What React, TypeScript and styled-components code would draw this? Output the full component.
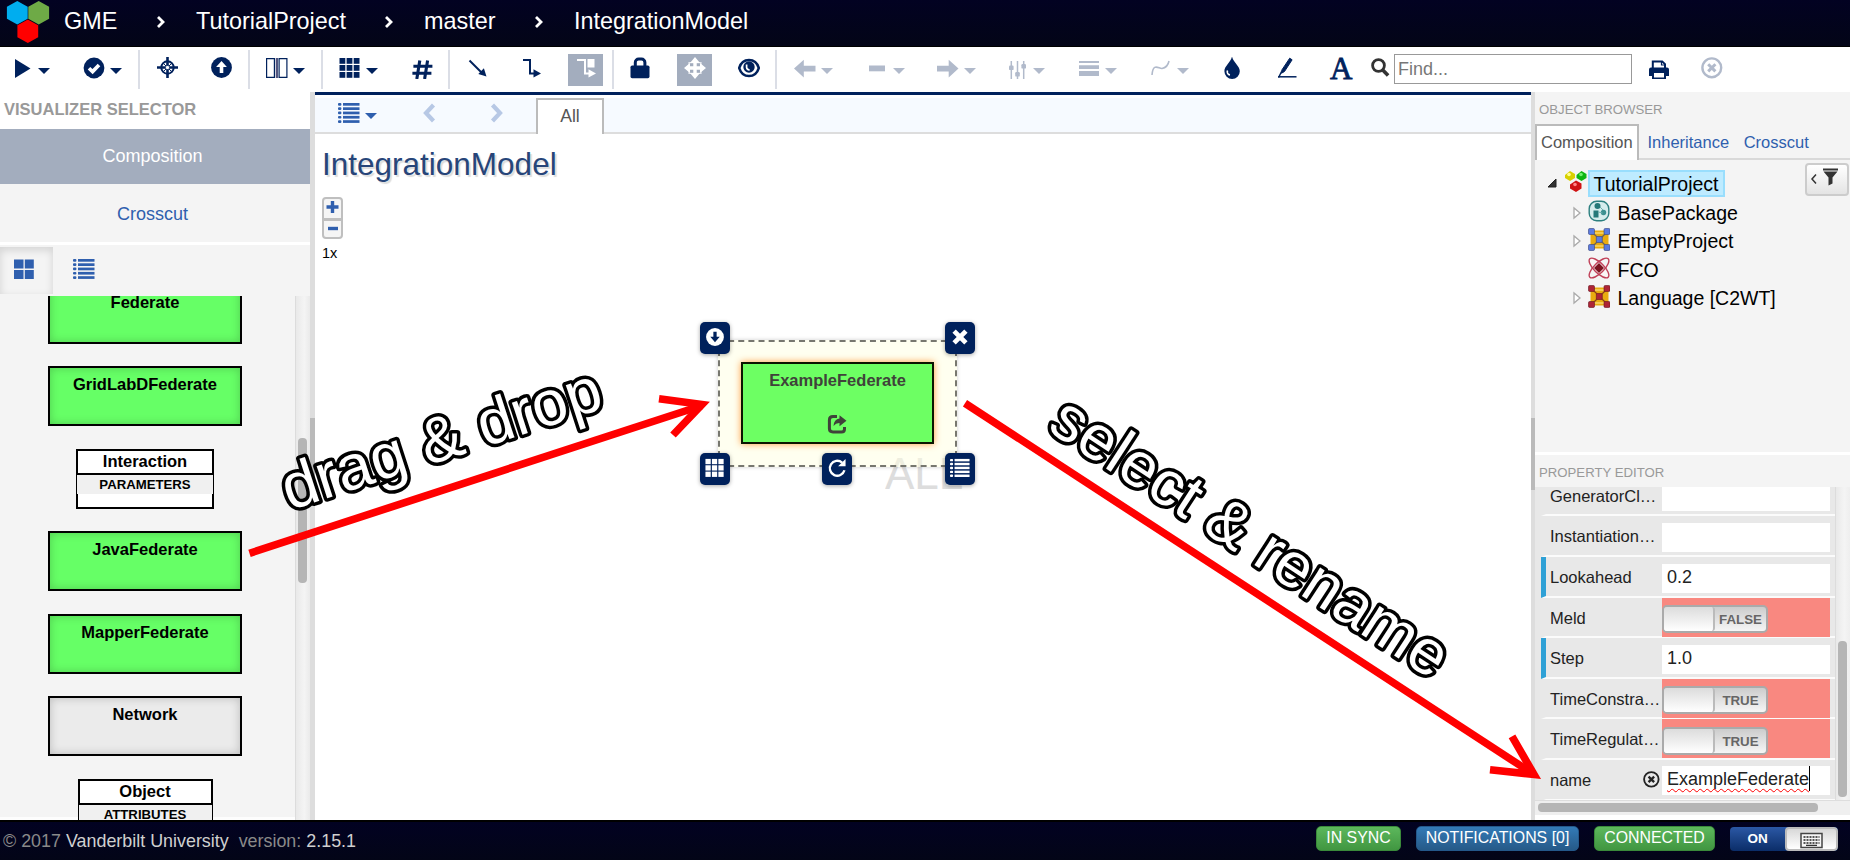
import React from 'react';
import styled, { createGlobalStyle, css } from 'styled-components';

const NAVY = '#00215c';
const BLUE = '#2f5fae';
const MUTED = '#b1bacb';

const GlobalStyle = createGlobalStyle`
  * { box-sizing: border-box; }
  body { margin: 0; background: #fff; font-family: "Liberation Sans", Arial, sans-serif; }
`;

const Page = styled.div`
  position: relative;
  display: flex;
  flex-direction: column;
  width: 1850px;
  height: 860px;
  overflow: hidden;
`;

/* ---------- icons ---------- */

const Glyph = styled.svg`
  display: block;
  flex: none;
  width: 22px;
  height: 22px;
`;

const grid9 = [1, 8, 15].flatMap((y) => [0.5, 7.6, 14.7].map((x) => (
  <rect key={`${x}-${y}`} x={x} y={y} width="5.8" height="5.8" />
)));

const listRows = [1, 5.3, 9.6, 13.9, 18.2].map((y) => (
  <React.Fragment key={y}>
    <rect x="0" y={y} width="3.4" height="2.7" rx="1" />
    <rect x="5" y={y} width="16.5" height="2.7" />
  </React.Fragment>
));

const icons: Record<string, React.ReactNode> = {
  play: <path d="M4 2 L19.5 11.5 L4 21 Z" />,
  check: (
    <>
      <circle cx="11" cy="11" r="10.4" />
      <path d="M6 11.2 L9.6 14.6 L16 8" fill="none" stroke="#fff" strokeWidth="3.6" />
    </>
  ),
  target: (
    <>
      <circle cx="10.5" cy="10.5" r="6.2" fill="none" stroke="currentColor" strokeWidth="2" />
      <path d="M10.5 0v21M0 10.5h21" stroke="currentColor" strokeWidth="2.6" fill="none" />
      <path d="M6.5 6.5l8 8M14.5 6.5l-8 8" stroke="currentColor" strokeWidth="1" fill="none" />
      <circle cx="10.5" cy="10.5" r="1.7" fill="#fff" />
    </>
  ),
  up: (
    <>
      <circle cx="10.5" cy="10.5" r="10.4" />
      <path d="M10.5 4.1l5.4 6h-3.6v6H8.7v-6H5.1z" fill="#fff" />
    </>
  ),
  down: (
    <>
      <circle cx="11" cy="11" r="9.8" fill="#fff" />
      <path d="M11 16.8l5.2-6h-3.400V5.200H9.200v5.600H5.800z" fill={NAVY} />
    </>
  ),
  columns: (
    <>
      <path d="M.6 1.6h7.8v18.8H.6zM13.1 1.6h7.8v18.8h-7.8z" fill="none" stroke="currentColor" strokeWidth="1.2" />
      <path d="M10.8 1v20" stroke="currentColor" strokeWidth="2" />
      <path d="M10.8 1v20" stroke="#a07a95" strokeWidth=".8" />
    </>
  ),
  grid: <>{grid9}</>,
  hash: <path d="M8.8 3.5L5.8 22M16.6 3.5l-3 18.5M2.4 9.3h19M1.4 16.2h19" fill="none" stroke="currentColor" strokeWidth="3.1" />,
  diagonal: (
    <>
      <path d="M2.5 3.5L15 16" stroke="currentColor" strokeWidth="2" />
      <path d="M19.5 19.5l-8.2-2.6 5.6-5.6z" />
    </>
  ),
  elbow: (
    <>
      <path d="M3 3h7v13.4h6" stroke="currentColor" strokeWidth="2" fill="none" />
      <path d="M21 16.4l-7.5-4.2v8.4z" />
    </>
  ),
  elbowBox: (
    <>
      <path d="M2 3h8v13.4h6" stroke="currentColor" strokeWidth="2" fill="none" />
      <path d="M21 16.4l-7.5-4.2v8.4z" />
      <rect x="12.5" y="2" width="7" height="8.5" />
    </>
  ),
  lock: (
    <>
      <rect x="1.5" y="8.6" width="19" height="12.6" rx="1.6" />
      <path d="M6.3 10V5.400A3.400 3.400 0 0 1 9.700 2h2.800A3.400 3.400 0 0 1 15.900 5.400V10" fill="none" stroke="currentColor" strokeWidth="3" />
    </>
  ),
  move: (
    <>
      <path d="M11 0l5 6H6zM11 22l5-6H6zM0 11l6-5v10zM22 11l-6-5v10z" />
      <path d="M11 4v14M4 11h14" stroke="currentColor" strokeWidth="3.4" />
      <path d="M5 5.6h12v10.8H5z" fill="none" stroke="currentColor" strokeWidth="1.2" opacity=".75" />
    </>
  ),
  eye: (
    <>
      <path d="M1.2 11C3 5 6.5 3 11 3s8 2 9.800 8c-1.800 6-5.300 8-9.800 8s-8-2-9.800-8z" fill="none" stroke="currentColor" strokeWidth="2.6" />
      <circle cx="11" cy="10" r="5.700" />
      <path d="M8.600 7.400v3a2.800 2.800 0 0 0 3 2.400" stroke="#fff" strokeWidth="1.700" fill="none" />
    </>
  ),
  left: <path d="M0 11.500l9.800-8.700v6h11.700v5.600H9.800v6z" />,
  right: <path d="M21.500 11.500l-9.800-8.700v6H0v5.600h11.700v6z" />,
  minus: <rect x="3" y="8.500" width="16" height="5.800" />,
  sliders: (
    <>
      <path d="M5.300 4v18M11.500 4v18M17.700 4v18" stroke="currentColor" strokeWidth="1.500" />
      <rect x="3" y="8.500" width="4.600" height="4.600" rx="1.200" />
      <rect x="9.200" y="15" width="4.600" height="4.600" rx="1.200" />
      <rect x="15.400" y="7" width="4.600" height="4.600" rx="1.200" />
    </>
  ),
  lines: <path d="M1 4h20v2H1zM1 8.300h20v3.600H1zM1 14h20v5H1z" />,
  curve: <path d="M2 18C3 5 9 12 12 11.500S18 9 19 4" fill="none" stroke="currentColor" strokeWidth="1.600" />,
  drop: (
    <>
      <path d="M11 -.6C12 5 18.800 9 18.800 14.200a7.700 7.700 0 0 1-15.400 0C3.400 9 10 5 11-.6z" />
      <path d="M6.600 13.500a3 3 0 0 0 2.400 4.400" stroke="#fff" strokeWidth="1.600" fill="none" />
    </>
  ),
  pencil: (
    <>
      <path d="M13.700 1.200l2.400 1.600L8.500 14.500l-3 1.700.4-3.300z" stroke="currentColor" strokeWidth="1" />
      <path d="M5.600 14.500l-3 6" stroke="currentColor" strokeWidth="1.500" />
      <path d="M2 19.800h18.500" stroke="currentColor" strokeWidth="1.500" />
    </>
  ),
  search: (
    <>
      <circle cx="9.500" cy="8.500" r="5.900" fill="none" stroke="currentColor" strokeWidth="2.800" />
      <path d="M13.500 12.800l5.600 5.800" stroke="currentColor" strokeWidth="3.600" />
    </>
  ),
  print: (
    <>
      <path d="M4.800 11V4.500h9.400l2.800 2.600V11M5 16v5.500h12V16" fill="none" stroke="currentColor" strokeWidth="2" />
      <path d="M1 12.500q0-2 2-2h16q2 0 2 2V19h-4v-3H5v3H1z" />
      <path d="M13.500 4v4H17" fill="none" stroke="currentColor" strokeWidth="1.200" />
    </>
  ),
  remove: (
    <>
      <circle cx="10.800" cy="10.800" r="9.400" fill="none" stroke="currentColor" strokeWidth="2.400" />
      <path d="M7.200 7.200l7.200 7.200M14.400 7.200l-7.200 7.200" stroke="currentColor" strokeWidth="3" />
    </>
  ),
  cross: <path d="M4.500 4.500l13 13M17.500 4.500l-13 13" stroke="currentColor" strokeWidth="5.200" />,
  list: <>{listRows}</>,
  tiles: <path d="M0 1.500h9.500v9H0zM10.800 1.500h9v9h-9zM0 12h9.500v9H0zM10.800 12h9v9h-9z" />,
  chevronLeft: <path d="M14.500 3L7 11l7.500 8" fill="none" stroke="currentColor" strokeWidth="4.200" />,
  chevronRight: <path d="M6.500 3L14 11l-7.500 8" fill="none" stroke="currentColor" strokeWidth="4.200" />,
  refresh: (
    <>
      <path d="M19.200 13.500A8.200 8.200 0 1 1 16.600 5" fill="none" stroke="currentColor" strokeWidth="2.600" />
      <path d="M20.400 1v8.200h-8.200z" />
    </>
  ),
  share: (
    <>
      <path d="M11 3.600H7Q3.400 3.600 3.400 7v8.600Q3.400 19 7 19h8.500q3 0 3-3v-2" fill="none" stroke="currentColor" strokeWidth="3" />
      <path d="M13.500 2.200l7 5.600-7 5.400V10q-3.500-.2-6 3 .5-7 6-7.500z" />
    </>
  ),
};

const Icon = ({ name }: { name: string }) => (
  <Glyph viewBox="0 0 22 22" fill="currentColor">{icons[name]}</Glyph>
);

/* ---------- header ---------- */

const Header = styled.header`
  display: flex;
  height: 47px;
  flex: none;
  padding-left: 6px;
  background: linear-gradient(#020222, #030517);
  border-bottom: 1px solid #000;
  color: #fff;
  font-size: 23.4px;
  line-height: 42px;
`;

const Logo = styled.svg`
  width: 44px;
  height: 44px;
  margin-right: 14px;
`;

const Crumb = styled.span<{ $width: number }>`
  width: ${(p) => p.$width}px;
  white-space: nowrap;
`;

const CrumbArrow = styled.svg`
  width: 10px;
  height: 12px;
  margin: 16px 30px 0 0;
`;

const hexagon = (cx: number, cy: number) =>
  `M${cx} ${cy - 11.700}l10.400 5.700v12l-10.400 5.700l-10.400-5.700v-12z`;

/* ---------- toolbar ---------- */

const Toolbar = styled.nav`
  display: flex;
  align-items: flex-start;
  flex: none;
  height: 45px;
  padding-top: 10px;
  background: #fff;
`;

const Tool = styled.div<{ $gap: number; $disabled?: boolean }>`
  display: flex;
  height: 22px;
  margin-left: ${(p) => p.$gap}px;
  color: ${(p) => (p.$disabled ? MUTED : NAVY)};
`;

const ActiveTool = styled.div<{ $gap: number }>`
  display: flex;
  justify-content: center;
  width: 35px;
  height: 32px;
  margin: -3px 0 0 ${(p) => p.$gap}px;
  padding-top: 3px;
  background: #a3adbe;
  color: #fff;
`;

const ToolDivider = styled.i<{ $gap: number }>`
  width: 2px;
  height: 39px;
  margin: -7px 0 0 ${(p) => p.$gap}px;
  background: #dbdee6;
`;

const Caret = styled.i`
  width: 0;
  height: 0;
  margin: 11px 0 0 5px;
  border: 6px solid transparent;
  border-top-color: currentColor;
  border-bottom: 0;
`;

const FontLetter = styled.span`
  width: 22px;
  text-align: center;
  font: 31px/23px "Liberation Serif", serif;
  -webkit-text-stroke: 0.8px currentColor;
`;

const SearchIcon = styled(Tool)`
  color: #333;
`;

const FindInput = styled.input`
  width: 238px;
  height: 30px;
  margin: -3px 0 0 3px;
  padding: 0 3px;
  border: 1px solid #999;
  font: 18px "Liberation Sans", Arial, sans-serif;
  &::placeholder { color: #777; opacity: 1; }
`;

type ToolSpec = { gap: number; icon?: string; caret?: boolean; active?: boolean; disabled?: boolean };

const tools: ToolSpec[] = [
  { gap: 11, icon: 'play', caret: true },
  { gap: 33, icon: 'check', caret: true },
  { gap: 16 },
  { gap: 17, icon: 'target' },
  { gap: 32, icon: 'up' },
  { gap: 15 },
  { gap: 16, icon: 'columns', caret: true },
  { gap: 16 },
  { gap: 16, icon: 'grid', caret: true },
  { gap: 33, icon: 'hash' },
  { gap: 15 },
  { gap: 17, icon: 'diagonal' },
  { gap: 31, icon: 'elbow' },
  { gap: 26, icon: 'elbowBox', active: true },
  { gap: 9 },
  { gap: 15, icon: 'lock' },
  { gap: 26, icon: 'move', active: true },
  { gap: 26, icon: 'eye' },
  { gap: 15 },
  { gap: 17, icon: 'left', caret: true, disabled: true },
  { gap: 33, icon: 'minus', caret: true, disabled: true },
  { gap: 32, icon: 'right', caret: true, disabled: true },
  { gap: 30, icon: 'sliders', caret: true, disabled: true },
  { gap: 33, icon: 'lines', caret: true, disabled: true },
  { gap: 33, icon: 'curve', caret: true, disabled: true },
  { gap: 32, icon: 'drop' },
  { gap: 33, icon: 'pencil' },
];

const ToolEntry = ({ gap, icon, caret, active, disabled }: ToolSpec) => {
  if (!icon) return <ToolDivider $gap={gap} />;
  if (active) return <ActiveTool $gap={gap}><Icon name={icon} /></ActiveTool>;
  return (
    <Tool $gap={gap} $disabled={disabled}>
      <Icon name={icon} />
      {caret && <Caret />}
    </Tool>
  );
};

/* ---------- left panel ---------- */

const Main = styled.main`
  display: flex;
  height: 728px;
  flex: none;
`;

const LeftPanel = styled.aside`
  display: flex;
  flex-direction: column;
  width: 310px;
  flex: none;
  background: #f4f4f4;
`;

const SelectorTitle = styled.h2`
  height: 37px;
  margin: 0;
  padding-left: 4px;
  background: #fff;
  color: #999;
  font-size: 16.500px;
  line-height: 34px;
`;

const SelectorItem = styled.div<{ $active?: boolean }>`
  height: ${(p) => (p.$active ? 55 : 58)}px;
  background: ${(p) => (p.$active ? '#a3adbe' : '#f4f4f4')};
  color: ${(p) => (p.$active ? '#fff' : BLUE)};
  font-size: 18px;
  line-height: ${(p) => (p.$active ? 55 : 61)}px;
  text-align: center;
  text-indent: -5px;
`;

const ViewTabs = styled.div`
  display: flex;
  height: 54px;
  border-top: 3px solid #fff;
  color: ${BLUE};
`;

const ViewTab = styled.div<{ $active?: boolean }>`
  width: 53px;
  height: 47px;
  margin-top: 2px;
  padding: 11px 0 0 14px;
  ${(p) => p.$active && css`
    box-shadow: inset 0 3px 8px rgba(0, 0, 0, 0.14);
  `}
  ${(p) => !p.$active && css`padding-left: 20px;`}
`;

const PartsArea = styled.div`
  display: flex;
  flex: 1;
  min-height: 0;
  overflow: hidden;
  background: linear-gradient(to top, #fdfdfd 3px, #f4f4f4 3px);
`;

const PartsList = styled.div`
  display: flex;
  flex-direction: column;
  align-items: center;
  gap: 22.500px;
  width: 295px;
  padding-right: 5px;
  margin-top: -12.500px;
`;

const Track = styled.div`
  width: 15px;
  border-left: 1px solid #dcdcdc;
  background: linear-gradient(90deg, #e9e9e9, #f4f4f4 60%, #eaeaea);
  padding: 142px 0 0 2px;
`;

const PartsThumb = styled.div`
  width: 9px;
  height: 145px;
  border-radius: 4px;
  background: #b5b5b5;
`;

const Part = styled.div<{ $plain?: boolean }>`
  flex: none;
  width: 194px;
  height: 60px;
  padding-top: 6px;
  border: 2px solid #000;
  background: ${(p) => (p.$plain ? '#ebebeb' : '#66ff66')};
  box-shadow: inset 0 0 10px rgba(0, 0, 0, 0.2);
  font-weight: bold;
  font-size: 16.500px;
  line-height: 20px;
  text-align: center;
`;

const RecordPart = styled.div<{ $width: number }>`
  flex: none;
  width: ${(p) => p.$width}px;
  height: 60px;
  border: 2px solid #000;
  background: #fff;
  font-weight: bold;
  text-align: center;
`;

const RecordName = styled.div`
  height: 24px;
  border-bottom: 2px solid #000;
  font-size: 16.500px;
  line-height: 21px;
`;

const RecordSection = styled.div`
  height: 19px;
  margin: 0 -1px;
  background: #f0f0f0;
  font-size: 13.200px;
  line-height: 19px;
`;

const Splitter = styled.div<{ $width: number }>`
  width: ${(p) => p.$width}px;
  flex: none;
  padding-top: 326px;
  background: #ddd;
`;

const SplitterGrip = styled.div`
  height: 72px;
  background: #bababa;
`;

/* ---------- canvas ---------- */

const Workspace = styled.section`
  display: flex;
  flex-direction: column;
  flex: 1;
  border-top: 3px solid ${NAVY};
`;

const TabBar = styled.div`
  display: flex;
  height: 39px;
  padding: 3px 0 0 23px;
  background: linear-gradient(#fff 3px, #f6faff 3px);
  border-bottom: 2px solid #ddd;
  color: ${BLUE};
`;

const TabMenu = styled.div`
  display: flex;
  width: 81px;
  margin-top: 4px;
`;

const TabArrow = styled.div`
  width: 67px;
  margin-top: 4px;
  color: #b7c8e5;
`;

const CanvasTab = styled.div`
  width: 68px;
  height: 36px;
  margin-left: -17px;
  border: 2px solid #bbb;
  border-bottom: 0;
  background: #fff;
  color: #555;
  font-size: 17.600px;
  line-height: 32px;
  text-align: center;
`;

const Canvas = styled.div`
  position: relative;
  flex: 1;
  padding: 9px 0 0 7px;
  background: #fff;
`;

const CanvasTitle = styled.h1`
  margin: 0;
  color: #274579;
  font-size: 31.500px;
  font-weight: normal;
  line-height: 42px;
  text-shadow: 2px 2px 1px #ddd;
`;

const ZoomButtons = styled.div`
  display: flex;
  flex-direction: column;
  width: 21px;
  height: 42px;
  margin-top: 12px;
  border: 2px solid #bfbfbf;
  border-radius: 4px;
  background: #f5f5f5;
`;

const ZoomButton = styled.svg`
  width: 17px;
  height: 19px;
  & + & { border-top: 3px solid #bfbfbf; }
`;

const ZoomLevel = styled.div`
  margin-top: 6px;
  font-size: 14.500px;
  line-height: 17px;
`;

const Watermark = styled.div`
  position: absolute;
  left: 570px;
  top: 318px;
  height: 38px;
  overflow: hidden;
  color: #ddd;
  font-size: 44px;
  line-height: 44px;
`;

const Selection = styled.div`
  position: absolute;
  left: 403px;
  top: 206px;
  width: 239px;
  height: 127px;
  padding: 20px 21px;
  border: 2px dashed #77776f;
  background: rgba(255, 255, 225, 0.5);
  box-shadow: 0 0 4px rgba(0, 0, 0, 0.2);
`;

const SelectedNode = styled.div`
  display: flex;
  flex-direction: column;
  align-items: center;
  width: 193px;
  height: 82px;
  padding-top: 6px;
  border: 2px solid #0b1500;
  background: #6dff63;
  box-shadow: 0 0 7px #ff9b3d;
  color: #40423a;
  font-weight: bold;
  font-size: 16.500px;
  line-height: 21px;
`;

const NodeRef = styled.div`
  margin: 22px 2px 0 0;
`;

const NodeAction = styled.div<{ $x: number; $y: number }>`
  position: absolute;
  left: ${(p) => p.$x}px;
  top: ${(p) => p.$y}px;
  width: 30px;
  height: 32px;
  padding: 5px;
  border-radius: 5px;
  background: ${NAVY};
  color: #fff;
  box-shadow: 0 1px 4px rgba(0, 0, 0, 0.35);
  ${Glyph} { width: 20px; height: 20px; }
`;

/* ---------- right panel ---------- */

const RightPanel = styled.aside`
  display: flex;
  flex-direction: column;
  width: 315px;
  flex: none;
  background: #f4f4f4;
`;

const PanelTitle = styled.h2<{ $line: number }>`
  height: 32px;
  flex: none;
  margin: 0;
  padding-left: 4px;
  color: #999;
  font-size: 13.200px;
  font-weight: normal;
  line-height: ${(p) => p.$line}px;
`;

const BrowserTabs = styled.div`
  display: flex;
  height: 36px;
  color: ${BLUE};
  font-size: 16.500px;
  line-height: 36px;
  box-shadow: inset 0 -2px #d9d9d9;
`;

const BrowserTab = styled.div<{ $active?: boolean }>`
  padding-left: 8.500px;
  padding-right: 6px;
  ${(p) => p.$active && css`
    width: 104px;
    padding: 0 4px;
    border: 2px solid #bbb;
    border-bottom: 0;
    background: #fff;
    color: #555;
    line-height: 33px;
  `}
`;

const Tree = styled.div`
  position: relative;
  height: 292px;
  padding-top: 10px;
`;

const TreeRow = styled.div<{ $root?: boolean }>`
  display: flex;
  height: ${(p) => (p.$root ? 29 : 28.400)}px;
  padding-left: ${(p) => (p.$root ? 11 : 37)}px;
  color: #000;
  font-size: 19.500px;
  line-height: 28px;
`;

const TreeGlyph = styled.svg<{ $width: number }>`
  width: ${(p) => p.$width}px;
  height: 24px;
  flex: none;
`;

const TreeLabel = styled.span<{ $selected?: boolean }>`
  padding-left: 7.500px;
  ${(p) => p.$selected && css`
    width: 137px;
    height: 27px;
    margin-left: 1px;
    padding-left: 3.500px;
    border: 2px solid #99defd;
    background: #beebff;
    line-height: 24px;
  `}
`;

const FilterButton = styled.button`
  position: absolute;
  right: 1px;
  top: 3px;
  width: 44px;
  height: 33px;
  padding: 0;
  border: 2px solid #ccc;
  border-radius: 4px;
  background: linear-gradient(#fff, #e4e4e4);
`;

const PropertyHeader = styled.div`
  height: 35px;
  flex: none;
  border-top: 3px solid #fff;
`;

const PropertyArea = styled.div`
  display: flex;
  height: 313px;
  flex: none;
`;

const PropertyList = styled.div`
  width: 300px;
  padding-left: 6px;
  overflow: hidden;
  background: #e8e8e8;
`;

const PropertyRow = styled.div<{ $marked?: boolean }>`
  display: flex;
  height: 40.600px;
  border-bottom: 2px solid #fbfbfb;
  border-left: 5px solid ${(p) => (p.$marked ? '#2fa1d6' : 'transparent')};
  padding-left: 4px;
  color: #222;
  font-size: 16.500px;
  line-height: 41px;
  &:first-child { margin-top: -11.200px; }
`;

const PropertyLabel = styled.span`
  display: flex;
  justify-content: space-between;
  width: 112px;
  flex: none;
  white-space: nowrap;
`;

const PropertyValue = styled.div<{ $flag?: boolean }>`
  width: 168px;
  height: ${(p) => (p.$flag ? 39 : 29)}px;
  margin-top: ${(p) => (p.$flag ? 0 : 6.500)}px;
  padding: ${(p) => (p.$flag ? '7.500px 0 0' : '0 5px')};
  background: ${(p) => (p.$flag ? '#f98880' : '#fff')};
  font-size: 18px;
  line-height: 26px;
`;

const TypedName = styled.span`
  display: inline-block;
  height: 25px;
  border-right: 1px solid #000;
  text-decoration: underline wavy #f00 1px;
  text-underline-offset: 3px;
  white-space: nowrap;
`;

const Switch = styled.div`
  display: flex;
  width: 106px;
  height: 28px;
  border: 2px solid #aaa;
  border-radius: 5px;
  background: linear-gradient(#ccc, #f6f6f6);
  color: #666;
  font-weight: bold;
  font-size: 13.300px;
  line-height: 25px;
`;

const SwitchKnob = styled.div`
  width: 51px;
  border-right: 2px solid #bbb;
  border-radius: 3px;
  background: linear-gradient(#dcdcdc, #fff);
`;

const SwitchText = styled.span`
  flex: 1;
  text-align: center;
`;

const ClearIcon = styled.span`
  margin: 11.500px 2px 0 0;
  color: #222;
  ${Glyph} { width: 17px; height: 17px; }
`;

const PropertyTrack = styled.div`
  width: 15px;
  padding: 154px 0 0 2px;
  border-left: 1px solid #dcdcdc;
  background: linear-gradient(90deg, #e9e9e9, #f4f4f4 60%, #eee);
`;

const PropertyThumb = styled.div`
  width: 9px;
  height: 156px;
  border-radius: 4px;
  background: #b5b5b5;
`;

const BottomTrack = styled.div`
  height: 15px;
  flex: none;
  padding: 2px 0 0 3px;
  background: #efefef;
  border-top: 1px solid #ddd;
`;

const BottomThumb = styled.div`
  width: 280px;
  height: 9px;
  border-radius: 4px;
  background: #b5b5b5;
`;

const PanelFoot = styled.div`
  flex: 1;
  background: #fff;
`;

/* ---------- footer ---------- */

const Footer = styled.footer`
  display: flex;
  height: 40px;
  flex: none;
  padding: 0 12px 0 3px;
  border-top: 2px solid #000;
  background: linear-gradient(#020222, #030517);
  color: #8a8a8a;
  font-size: 17.900px;
  line-height: 39px;
  white-space: pre;
  b { color: #d0d0d0; font-weight: normal; }
`;

const Status = styled.div`
  display: flex;
  gap: 15px;
  margin-left: auto;
  padding-top: 4px;
`;

const Badge = styled.span<{ $width: number; $blue?: boolean }>`
  width: ${(p) => p.$width}px;
  height: 25px;
  border: 1px solid ${(p) => (p.$blue ? '#24588a' : '#3a8a3a')};
  border-radius: 5px;
  background: ${(p) => (p.$blue ? 'linear-gradient(#337ab7, #265a88)' : 'linear-gradient(#5cb85c, #419641)')};
  color: #fff;
  font-size: 15.900px;
  line-height: 21px;
  text-align: center;
`;

const KeyboardSwitch = styled.div`
  display: flex;
  width: 108px;
  height: 24px;
  margin-top: 1px;
  border-radius: 4px;
  overflow: hidden;
  background: linear-gradient(#2b58a5, #0b2d68);
  color: #fff;
  font-weight: bold;
  font-size: 13.500px;
  line-height: 23px;
  text-align: center;
`;

const SwitchOn = styled.span`
  width: 55px;
`;

const SwitchHandle = styled.svg`
  width: 53px;
  height: 24px;
  border: 2px solid #bbb;
  border-radius: 4px;
  background: linear-gradient(#d8d8d8, #fff);
`;

/* ---------- annotations ---------- */

const Annotations = styled.svg`
  position: absolute;
  left: 0;
  top: 0;
  width: 1850px;
  height: 860px;
  pointer-events: none;
  path { fill: none; stroke: #f00; stroke-width: 7.600; }
  text {
    font-family: "Liberation Sans", Arial, sans-serif;
    font-size: 63.700px;
    fill: #fff;
    stroke: #000;
    stroke-width: 7;
    stroke-linejoin: round;
    paint-order: stroke;
  }
`;

/* ---------- tree drawings ---------- */

const modelIcon = (ball: string, edge: string) => (
  <>
    <rect x="2.500" y="2.500" width="18" height="18" fill="#e9ab10" />
    <path d="M3 3l17 17M20 3L3 20" stroke={edge} strokeWidth="1.200" opacity=".7" />
    <path d="M6 5h11M6 18h11" stroke="#f8d86a" strokeWidth="1.500" />
    {[[3.5, 3.5], [19, 3.5], [3.5, 19.5], [19, 19.5], [11.300, 11.500]].map(([x, y]) => (
      <rect key={`${x},${y}`} x={x - 3} y={y - 3} width="6" height="6" rx="1.200" fill={ball} stroke={edge} strokeWidth=".6" />
    ))}
  </>
);

const treeIcons: Record<string, React.ReactNode> = {
  base: (
    <>
      <rect x="1.200" y="1.200" width="19.600" height="19.600" rx="7.500" fill="#d5ecec" stroke="#2c7f7f" strokeWidth="1.400" />
      <circle cx="9.500" cy="6" r="3" fill="#257878" />
      <rect x="5.500" y="10.500" width="5" height="7" fill="#257878" />
      <circle cx="15.500" cy="12.500" r="2.700" fill="#3b9090" />
      <path d="M12 7l3 3M10.500 12l4 1" stroke="#6fb0b0" />
    </>
  ),
  empty: modelIcon('#5b7be0', '#34427c'),
  fco: (
    <>
      <ellipse cx="11" cy="11" rx="13" ry="5" transform="rotate(45 11 11)" fill="#fff5f5" fillOpacity=".5" stroke="#c04058" strokeWidth="1.400" />
      <ellipse cx="11" cy="11" rx="13" ry="5" transform="rotate(-45 11 11)" fill="none" stroke="#c04058" strokeWidth="1.400" />
      <path d="M11 6l5 5-5 5-5-5z" fill="#7c1420" />
    </>
  ),
  language: modelIcon('#ad2436', '#64141e'),
};

const treeItems = [
  { icon: 'base', label: 'BasePackage', open: true },
  { icon: 'empty', label: 'EmptyProject', open: true },
  { icon: 'fco', label: 'FCO', open: false },
  { icon: 'language', label: 'Language [C2WT]', open: true },
];

const properties: { label: string; value?: string; flag?: string; marked?: boolean }[] = [
  { label: 'GeneratorCl…', value: '' },
  { label: 'Instantiation…', value: '' },
  { label: 'Lookahead', value: '0.2', marked: true },
  { label: 'Meld', flag: 'FALSE' },
  { label: 'Step', value: '1.0', marked: true },
  { label: 'TimeConstra…', flag: 'TRUE' },
  { label: 'TimeRegulat…', flag: 'TRUE' },
];

const nodeActions = [
  { icon: 'down', x: 385, y: 188 },
  { icon: 'cross', x: 629.500, y: 188 },
  { icon: 'grid', x: 385, y: 319 },
  { icon: 'refresh', x: 507, y: 319 },
  { icon: 'list', x: 629.500, y: 319 },
];

const BreadcrumbArrow = () => (
  <CrumbArrow viewBox="0 0 10 12">
    <path d="M2 1l5 5-5 5" fill="none" stroke="#fff" strokeWidth="2.800" />
  </CrumbArrow>
);

export default function App() {
  return (
    <Page>
      <GlobalStyle />
      <Header>
        <Logo viewBox="6 0 44 44">
          <path d={hexagon(17.3, 12.700)} fill="#00adef" />
          <path d={hexagon(38.700, 12.700)} fill="#6eaa46" />
          <path d={hexagon(27.800, 31.200)} fill="#f00" />
        </Logo>
        <Crumb $width={92}>GME</Crumb>
        <BreadcrumbArrow />
        <Crumb $width={188}>TutorialProject</Crumb>
        <BreadcrumbArrow />
        <Crumb $width={110}>master</Crumb>
        <BreadcrumbArrow />
        <Crumb $width={180}>IntegrationModel</Crumb>
      </Header>

      <Toolbar>
        {tools.map((tool, i) => <ToolEntry key={i} {...tool} />)}
        <Tool $gap={32}><FontLetter>A</FontLetter></Tool>
        <SearchIcon $gap={17}><Icon name="search" /></SearchIcon>
        <FindInput placeholder="Find..." />
        <Tool $gap={16}><Icon name="print" /></Tool>
        <Tool $gap={31} $disabled><Icon name="remove" /></Tool>
      </Toolbar>

      <Main>
        <LeftPanel>
          <SelectorTitle>VISUALIZER SELECTOR</SelectorTitle>
          <SelectorItem $active>Composition</SelectorItem>
          <SelectorItem>Crosscut</SelectorItem>
          <ViewTabs>
            <ViewTab $active><Icon name="tiles" /></ViewTab>
            <ViewTab><Icon name="list" /></ViewTab>
          </ViewTabs>
          <PartsArea>
            <PartsList>
              <Part>Federate</Part>
              <Part>GridLabDFederate</Part>
              <RecordPart $width={138}>
                <RecordName>Interaction</RecordName>
                <RecordSection>PARAMETERS</RecordSection>
              </RecordPart>
              <Part>JavaFederate</Part>
              <Part>MapperFederate</Part>
              <Part $plain>Network</Part>
              <RecordPart $width={135}>
                <RecordName>Object</RecordName>
                <RecordSection>ATTRIBUTES</RecordSection>
              </RecordPart>
            </PartsList>
            <Track><PartsThumb /></Track>
          </PartsArea>
        </LeftPanel>
        <Splitter $width={5}><SplitterGrip /></Splitter>

        <Workspace>
          <TabBar>
            <TabMenu><Icon name="list" /><Caret /></TabMenu>
            <TabArrow><Icon name="chevronLeft" /></TabArrow>
            <TabArrow><Icon name="chevronRight" /></TabArrow>
            <CanvasTab>All</CanvasTab>
          </TabBar>
          <Canvas>
            <CanvasTitle>IntegrationModel</CanvasTitle>
            <ZoomButtons>
              <ZoomButton viewBox="0 0 17 19"><path d="M2.500 8h12M8.500 2v12" stroke={BLUE} strokeWidth="3.400" /></ZoomButton>
              <ZoomButton viewBox="0 0 17 16"><path d="M4 7.500h10" stroke={BLUE} strokeWidth="3.400" /></ZoomButton>
            </ZoomButtons>
            <ZoomLevel>1x</ZoomLevel>
            <Watermark>ALL</Watermark>
            <Selection>
              <SelectedNode>
                ExampleFederate
                <NodeRef><Icon name="share" /></NodeRef>
              </SelectedNode>
            </Selection>
            {nodeActions.map((a) => (
              <NodeAction key={a.icon} $x={a.x} $y={a.y}><Icon name={a.icon} /></NodeAction>
            ))}
          </Canvas>
        </Workspace>
        <Splitter $width={4}><SplitterGrip /></Splitter>

        <RightPanel>
          <PanelTitle $line={35}>OBJECT BROWSER</PanelTitle>
          <BrowserTabs>
            <BrowserTab $active>Composition</BrowserTab>
            <BrowserTab>Inheritance</BrowserTab>
            <BrowserTab>Crosscut</BrowserTab>
          </BrowserTabs>
          <Tree>
            <TreeRow $root>
              <TreeGlyph $width={18} viewBox="0 0 18 24"><path d="M10 9v8H2z" fill="#333" stroke="#222" /></TreeGlyph>
              <TreeGlyph $width={23} viewBox="0 0 23 24">
                <path d="M1 5l5-4 5 3v4l-5 3-5-3z" fill="#d8d000" /><circle cx="5" cy="4.500" r="1.800" fill="#ffff8c" />
                <path d="M12.500 5l5-4 5 3v4l-5 3-5-3z" fill="#0db512" /><circle cx="17" cy="4.500" r="1.800" fill="#6cf06c" />
                <path d="M6 14.500l6-4 5.500 3v5l-5.500 3.500-6-3.500z" fill="#cf1212" /><circle cx="11" cy="14.500" r="1.800" fill="#ff8484" />
              </TreeGlyph>
              <TreeLabel $selected>TutorialProject</TreeLabel>
            </TreeRow>
            {treeItems.map((item) => (
              <TreeRow key={item.label}>
                <TreeGlyph $width={16} viewBox="0 0 16 24">
                  {item.open && <path d="M2 9v10l6-5z" fill="#fff" stroke="#aaa" strokeWidth="1.300" />}
                </TreeGlyph>
                <TreeGlyph $width={22} viewBox="0 -1 22 24">{treeIcons[item.icon]}</TreeGlyph>
                <TreeLabel>{item.label}</TreeLabel>
              </TreeRow>
            ))}
            <FilterButton>
              <svg width="40" height="29" viewBox="0 0 40 29">
                <path d="M9 9.500l-4 4.500 4 4.500" fill="none" stroke="#333" strokeWidth="1.500" />
                <path d="M16 3.500h15v2H16z" fill="#333" />
                <path d="M16.500 6.500h14l-5 6v6l-4 2v-8z" fill="#333" />
              </svg>
            </FilterButton>
          </Tree>
          <PropertyHeader><PanelTitle $line={35}>PROPERTY EDITOR</PanelTitle></PropertyHeader>
          <PropertyArea>
            <PropertyList>
              {properties.map((p) => (
                <PropertyRow key={p.label} $marked={p.marked}>
                  <PropertyLabel>{p.label}</PropertyLabel>
                  <PropertyValue $flag={!!p.flag}>
                    {p.flag ? <Switch><SwitchKnob /><SwitchText>{p.flag}</SwitchText></Switch> : p.value}
                  </PropertyValue>
                </PropertyRow>
              ))}
              <PropertyRow>
                <PropertyLabel>name<ClearIcon><Icon name="remove" /></ClearIcon></PropertyLabel>
                <PropertyValue><TypedName>ExampleFederate</TypedName></PropertyValue>
              </PropertyRow>
            </PropertyList>
            <PropertyTrack><PropertyThumb /></PropertyTrack>
          </PropertyArea>
          <BottomTrack><BottomThumb /></BottomTrack>
          <PanelFoot />
        </RightPanel>
      </Main>

      <Footer>
        <span>© 2017 <b>Vanderbilt University</b></span>
        <span>{'  '}version: <b>2.15.1</b></span>
        <Status>
          <Badge $width={85}>IN SYNC</Badge>
          <Badge $width={163} $blue>NOTIFICATIONS [0]</Badge>
          <Badge $width={121}>CONNECTED</Badge>
          <KeyboardSwitch>
            <SwitchOn>ON</SwitchOn>
            <SwitchHandle viewBox="0 0 49 20">
              <rect x="14" y="4.500" width="21" height="14" fill="#f6f6f6" stroke="#444" strokeWidth="1.500" />
              <path d="M16.500 8h16M16.500 11h16M16.500 14h16" stroke="#555" strokeWidth="1.800" strokeDasharray="2 1" />
              <path d="M19 16.400h11" stroke="#333" strokeWidth="1.400" />
            </SwitchHandle>
          </KeyboardSwitch>
        </Status>
      </Footer>

      <Annotations viewBox="0 0 1850 860">
        <path d="M249.500 553.300L702 405.500" />
        <path d="M659 398.700L702 404.500L673 435" strokeMiterlimit="10" />
        <path d="M965 403.300L1534 774.500" />
        <path d="M1490 769.700L1534 774.500L1512 736.300" strokeMiterlimit="10" />
        <text transform="translate(289.400 510.500) rotate(-18)">drag &amp; drop</text>
        <text transform="translate(1046 429.600) rotate(33)">select &amp; rename</text>
      </Annotations>
    </Page>
  );
}
